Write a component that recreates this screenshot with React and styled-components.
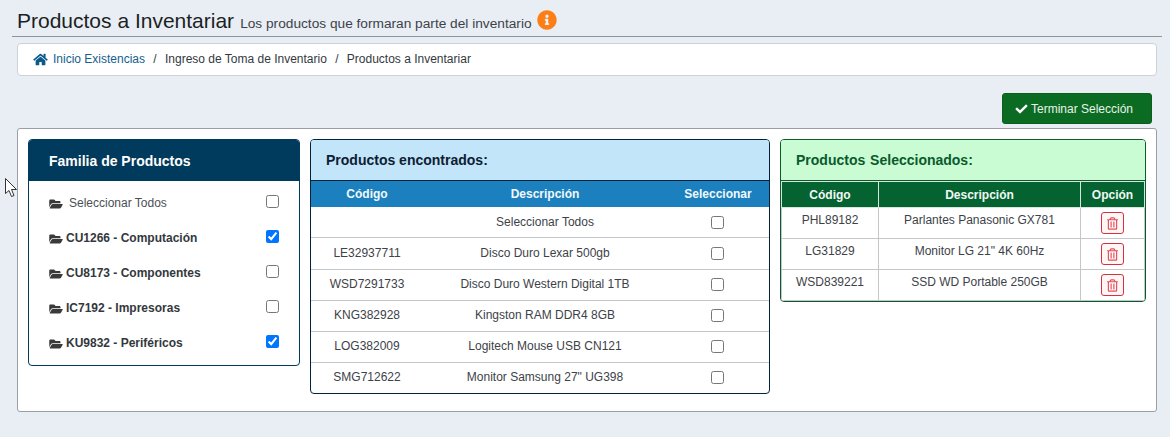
import React from 'react';
import styled, { createGlobalStyle } from 'styled-components';
import { FaHome, FaFolderOpen, FaCheck, FaInfoCircle, FaRegTrashAlt } from 'react-icons/fa';

const familias = [
    { label: 'Seleccionar Todos', all: true },
    { label: 'CU1266 - Computación', checked: true },
    { label: 'CU8173 - Componentes' },
    { label: 'IC7192 - Impresoras' },
    { label: 'KU9832 - Periféricos', checked: true },
];

const encontrados = [
    ['', 'Seleccionar Todos'],
    ['LE32937711', 'Disco Duro Lexar 500gb'],
    ['WSD7291733', 'Disco Duro Western Digital 1TB'],
    ['KNG382928', 'Kingston RAM DDR4 8GB'],
    ['LOG382009', 'Logitech Mouse USB CN121'],
    ['SMG712622', 'Monitor Samsung 27" UG398'],
];

const seleccionados = [
    ['PHL89182', 'Parlantes Panasonic GX781'],
    ['LG31829', 'Monitor LG 21" 4K 60Hz'],
    ['WSD839221', 'SSD WD Portable 250GB'],
];

const App = () => {
    return (
        <Page>
            <GlobalStyle />
            <Cursor viewBox="0 0 13 20" aria-hidden="true">
                <path d="M0.5 0.5 L0.5 15.5 L4 12.5 L6.5 18.5 L9 17.5 L6.5 11.5 L11.5 11.5 Z" fill="#fff" stroke="#333" strokeWidth="1" />
            </Cursor>
            <TitleBar>
                <Title>Productos a Inventariar</Title>
                <Subtitle>Los productos que formaran parte del inventario</Subtitle>
                <InfoIcon />
            </TitleBar>
            <Breadcrumb>
                <HomeIcon />
                <CrumbLink>Inicio Existencias</CrumbLink>
                <Slash>/</Slash>
                <span>Ingreso de Toma de Inventario</span>
                <Slash>/</Slash>
                <span>Productos a Inventariar</span>
            </Breadcrumb>
            <Actions>
                <FinishButton><FaCheck /> Terminar Selección</FinishButton>
            </Actions>
            <MainCard>
                <FamilyPanel>
                    <FamilyHeader>Familia de Productos</FamilyHeader>
                    <FamilyList>
                        {familias.map((f) => (
                            <FamilyRow key={f.label}>
                                <FolderIcon />
                                <FamilyLabel $all={f.all}>{f.label}</FamilyLabel>
                                <FamilyCheck defaultChecked={!!f.checked} />
                            </FamilyRow>
                        ))}
                    </FamilyList>
                </FamilyPanel>

                <ProductsPanel>
                    <ProductsHeader>Productos encontrados:</ProductsHeader>
                    <Table>
                        <colgroup>
                            <col style={{ width: 112 }} />
                            <col style={{ width: 244 }} />
                            <col />
                        </colgroup>
                        <thead>
                            <tr>
                                <BlueTh>Código</BlueTh>
                                <BlueTh>Descripción</BlueTh>
                                <BlueTh>Seleccionar</BlueTh>
                            </tr>
                        </thead>
                        <tbody>
                            {encontrados.map(([codigo, desc]) => (
                                <Row key={desc}>
                                    <Td>{codigo}</Td>
                                    <Td>{desc}</Td>
                                    <CheckTd><Check /></CheckTd>
                                </Row>
                            ))}
                        </tbody>
                    </Table>
                </ProductsPanel>

                <SelectedPanel>
                    <SelectedHeader>Productos Seleccionados:</SelectedHeader>
                    <Table>
                        <colgroup>
                            <col style={{ width: 97 }} />
                            <col style={{ width: 202 }} />
                            <col />
                        </colgroup>
                        <thead>
                            <tr>
                                <GreenTh>Código</GreenTh>
                                <GreenTh>Descripción</GreenTh>
                                <GreenTh>Opción</GreenTh>
                            </tr>
                        </thead>
                        <tbody>
                            {seleccionados.map(([codigo, desc]) => (
                                <tr key={codigo}>
                                    <GridTd>{codigo}</GridTd>
                                    <GridTd>{desc}</GridTd>
                                    <ActionTd>
                                        <TrashButton><FaRegTrashAlt /></TrashButton>
                                    </ActionTd>
                                </tr>
                            ))}
                        </tbody>
                    </Table>
                </SelectedPanel>
            </MainCard>
        </Page>
    );
};

const GlobalStyle = createGlobalStyle`
    html, body {
        margin: 0;
        background: #e9eef5;
        font-family: "Liberation Sans", Arial, sans-serif;
        color: #212529;
    }
    * {
        box-sizing: border-box;
    }
`;

const Page = styled.div`
    position: relative;
    width: 1170px;
    height: 437px;
    overflow: hidden;
    padding-top: 8px;
`;

const Cursor = styled.svg`
    position: absolute;
    left: 5px;
    top: 178px;
    width: 13px;
    height: 20px;
`;

const TitleBar = styled.div`
    display: flex;
    align-items: baseline;
    height: 29px;
    margin: 0 8px 0 12px;
    padding-left: 5px;
    border-bottom: 1px solid #8f9499;
`;

const Title = styled.h1`
    margin: 0;
    font-size: 21px;
    font-weight: 400;
    line-height: 25px;
    color: #1b1f23;
`;

const Subtitle = styled.small`
    margin-left: 6px;
    font-size: 13.7px;
    color: #3c4248;
`;

const InfoIcon = styled(FaInfoCircle)`
    align-self: flex-start;
    margin-left: 5px;
    margin-top: 2px;
    width: 20px;
    height: 20px;
    color: #fd7e14;
`;

const Breadcrumb = styled.nav`
    display: flex;
    align-items: center;
    height: 33px;
    margin: 6px 13px 0 17px;
    padding-left: 15px;
    padding-bottom: 1px;
    background: #fff;
    border: 1px solid #ced2d8;
    border-radius: 4px;
    font-size: 12px;
    color: #33393f;
`;

const HomeIcon = styled(FaHome)`
    width: 15px;
    height: 13px;
    margin-right: 5px;
    color: #0b5a8a;
`;

const CrumbLink = styled.a`
    color: #14608f;
`;

const Slash = styled.span`
    margin: 0 8.3px;
`;

const Actions = styled.div`
    display: flex;
    justify-content: flex-end;
    margin-top: 17px;
    padding-right: 18px;
`;

const FinishButton = styled.button`
    display: flex;
    align-items: center;
    justify-content: flex-start;
    gap: 3px;
    width: 150px;
    height: 31px;
    padding: 0 0 0 12px;
    background: #0b6b22;
    border: 1px solid #0a5f1f;
    border-radius: 3px;
    color: #e9f3ec;
    font-family: inherit;
    font-size: 12px;

    svg {
        width: 13px;
        height: 12px;
        color: #fff;
    }
`;

const MainCard = styled.section`
    display: flex;
    align-items: flex-start;
    gap: 10px;
    height: 284px;
    margin: 4px 13px 0 17px;
    padding: 10px;
    background: #fff;
    border: 1px solid #9a9fa5;
    border-radius: 3px;
`;

const FamilyPanel = styled.div`
    width: 272px;
    height: 227px;
    border: 1px solid #003a5c;
    border-radius: 4px;
    overflow: hidden;
`;

const FamilyHeader = styled.h2`
    display: flex;
    align-items: center;
    height: 41px;
    margin: 0;
    padding-left: 20px;
    background: #003a5c;
    color: #fff;
    font-size: 14px;
    font-weight: 700;
`;

const FamilyList = styled.div`
    padding: 4px 20px 0 20px;
`;

const FamilyRow = styled.label`
    display: flex;
    align-items: center;
    height: 35px;
    font-size: 12px;
`;

const FolderIcon = styled(FaFolderOpen)`
    flex: none;
    width: 14px;
    height: 12px;
    margin-top: 2px;
    color: #3a3a3a;
`;

const FamilyLabel = styled.span`
    flex: 1;
    margin-left: ${(p) => (p.$all ? '6px' : '3px')};
    font-weight: ${(p) => (p.$all ? 400 : 700)};
    color: ${(p) => (p.$all ? '#4a4f54' : '#33383d')};
`;

const Check = styled.input.attrs({ type: 'checkbox' })`
    margin: 0;
    width: 13px;
    height: 13px;
    vertical-align: middle;
`;

const FamilyCheck = styled(Check)`
    margin-bottom: 2px;
`;

const ProductsPanel = styled.div`
    width: 460px;
    border: 1px solid #02233a;
    border-radius: 4px;
    overflow: hidden;
`;

const ProductsHeader = styled.h2`
    display: flex;
    align-items: center;
    height: 41px;
    margin: 0;
    padding-left: 15px;
    background: #c3e5f9;
    border-bottom: 1px solid #02233a;
    color: #0d2033;
    font-size: 14px;
    font-weight: 700;
`;

const SelectedPanel = styled.div`
    width: 366px;
    border: 1px solid #0a5a2c;
    border-radius: 4px;
    overflow: hidden;
`;

const SelectedHeader = styled.h2`
    display: flex;
    align-items: center;
    height: 41px;
    margin: 0;
    padding-left: 15px;
    background: #c9fcd3;
    border-bottom: 1px solid #0a5a2c;
    color: #0a5a2c;
    font-size: 14px;
    font-weight: 700;
    word-spacing: 1px;
`;

const Table = styled.table`
    width: 100%;
    table-layout: fixed;
    border-collapse: separate;
    border-spacing: 0;
    font-size: 12px;
`;

const BlueTh = styled.th`
    height: 26px;
    padding: 0;
    background: #1b80bd;
    color: #f2f8fc;
    font-size: 12px;
    font-weight: 700;
`;

const GreenTh = styled.th`
    height: 27px;
    padding: 0;
    background: #056331;
    border: 1px solid #d7e5dc;
    border-right: 0;
    color: #f2f8f4;
    font-size: 12px;
    font-weight: 700;

    &:last-child {
        border-right: 1px solid #d7e5dc;
    }
`;

const Row = styled.tr`
    td {
        padding-bottom: 2px;
        border-bottom: 1px solid #c4c7ca;
    }

    &:first-child td {
        padding-bottom: 1px;
    }

    &:nth-child(2) td {
        height: 32px;
    }

    &:last-child td {
        height: 30px;
        border-bottom: 0;
    }
`;

const Td = styled.td`
    height: 31px;
    padding: 0 0 1px;
    text-align: center;
    color: #3d4248;
`;

const CheckTd = styled(Td)`
    padding-right: 1px;
`;

const GridTd = styled(Td)`
    padding-bottom: 7px;
    border-left: 1px solid #c4c7ca;
    border-bottom: 1px solid #c4c7ca;
`;

const ActionTd = styled(GridTd)`
    padding-bottom: 0;
    border-right: 1px solid #c4c7ca;
`;

const TrashButton = styled.button`
    display: inline-flex;
    align-items: center;
    justify-content: center;
    width: 23px;
    height: 22px;
    padding: 0;
    vertical-align: middle;
    background: #fff6f6;
    border: 1px solid #d9303e;
    border-radius: 3px;
    color: #e0525f;

    svg {
        width: 11px;
        height: 13px;
    }
`;

export default App;
